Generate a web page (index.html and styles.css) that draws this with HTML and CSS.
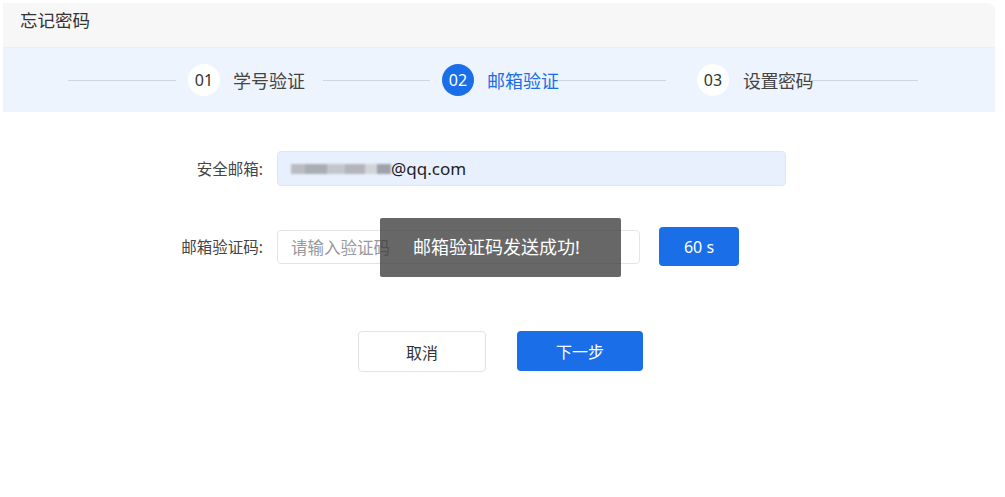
FILE: index.html
```html
<!DOCTYPE html>
<html lang="zh-CN">
<head>
    <meta charset="UTF-8">
    <link rel="stylesheet" href="styles.css">
</head>
<body>
    <div class="card">
        <div class="header">
            <span class="title">忘记密码</span>
        </div>

        <div class="steps">
            <span class="line line1"></span>
            <span class="num num1">01</span>
            <span class="step-name name1">学号验证</span>
            <span class="line line2"></span>
            <span class="num num2 active">02</span>
            <span class="step-name name2 active">邮箱验证</span>
            <span class="line line3"></span>
            <span class="num num3">03</span>
            <span class="step-name name3">设置密码</span>
            <span class="line line4"></span>
        </div>

        <div class="form">
            <div class="row row1">
                <label class="label">安全邮箱:</label>
                <div class="input input-mail">
                    <span class="blur">
                        <i class="px p1"></i><i class="px p2"></i><i class="px p3"></i><i class="px p4"></i><i class="px p5"></i><i class="px p6"></i>
                    </span>@qq.com
                </div>
            </div>
            <div class="row row2">
                <label class="label">邮箱验证码:</label>
                <div class="input input-code">请输入验证码</div>
                <button class="btn btn-primary btn-count">60 s</button>
            </div>
            <div class="actions">
                <button class="btn btn-cancel">取消</button>
                <button class="btn btn-primary btn-next">下一步</button>
            </div>
        </div>

        <div class="toast">邮箱验证码发送成功!</div>
    </div>
</body>
</html>
```

FILE: styles.css
```css
body {
    margin: 0;
    background: #fff;
    font-family: "Noto Sans", "Noto Sans CJK SC", sans-serif;
    color: #333;
}
.card {
    position: relative;
    margin: 3px 0 0 3px;
    width: 992px;
    height: 494px;
    border-radius: 0 8px 0 0;
    overflow: hidden;
}
.header {
    height: 45px;
    background: #f7f7f7;
    padding-left: 17px;
    border-bottom: 1px solid #eceef1;
    box-sizing: border-box;
}
.title {
    font-size: 17.5px;
    line-height: 35px;
    color: #333;
}

/* steps */
.steps {
    height: 64px;
    background: #eef4fd;
    display: flex;
    align-items: center;
    padding-left: 65px;
}
.line {
    height: 1px;
    background: #cfd6df;
    width: 107px;
}
.line1 { width: 108px; }
.line2 { margin-left: 18px; }
.line4 { margin-left: -3px; width: 108px; }
.num {
    width: 32px;
    height: 32px;
    border-radius: 50%;
    background: #fff;
    font-size: 16px;
    line-height: 32px;
    text-align: center;
    color: #333;
    margin-left: 12px;
}
.num3 { margin-left: 31px; }
.num.active {
    background: #1a6fe8;
    color: #fff;
}
.step-name {
    font-size: 18px;
    margin-left: 13px;
    color: #444;
}
.name3 { margin-left: 14px; letter-spacing: -0.5px; }
.step-name.active { color: #1a6fe8; }

/* form */
.form {
    padding-top: 39px;
}
.row {
    display: flex;
    align-items: center;
}
.row1 { height: 35px; }
.row2 { height: 39px; margin-top: 41px; }
.label {
    width: 260px;
    text-align: right;
    margin-right: 14px;
    font-size: 15.5px;
    color: #444;
}
.input {
    box-sizing: border-box;
    border-radius: 4px;
    display: flex;
    align-items: center;
    padding-left: 13px;
}
.input-mail {
    width: 509px;
    height: 35px;
    background: #e8f0fe;
    border: 1px solid #dde6f3;
    font-size: 17px;
    color: #222;
}
.blur {
    display: flex;
    width: 100px;
    height: 10px;
    filter: blur(1px);
    margin-top: 1px;
}
.px { display: block; height: 10px; }
.p1 { width: 14px; background: #b9bcc2; }
.p2 { width: 22px; background: #a9adb4; }
.p3 { width: 18px; background: #c3c6cc; }
.p4 { width: 20px; background: #b2b5bb; }
.p5 { width: 12px; background: #d2d4d9; }
.p6 { width: 14px; background: #9ea2aa; }
.input-code {
    width: 363px;
    height: 34px;
    background: #fff;
    border: 1px solid #e4e4e4;
    font-size: 16.5px;
    color: #999;
}
.btn {
    box-sizing: border-box;
    border-radius: 4px;
    font-family: inherit;
    font-size: 16px;
    cursor: pointer;
}
.btn-primary {
    background: #1a6fe8;
    border: none;
    color: #fff;
}
.btn-count {
    width: 80px;
    height: 39px;
    margin-left: 19px;
}
.actions {
    display: flex;
    justify-content: center;
    gap: 31px;
    margin-top: 65px;
    padding-left: 3px;
}
.btn-cancel {
    width: 128px;
    height: 41px;
    background: #fff;
    border: 1px solid #e2e2e2;
    color: #333;
}
.btn-next {
    width: 126px;
    height: 40px;
}

/* toast */
.toast {
    position: absolute;
    left: 377px;
    top: 215px;
    width: 241px;
    height: 59px;
    box-sizing: border-box;
    padding-left: 33px;
    background: rgba(60, 60, 60, 0.78);
    color: #fff;
    font-size: 18px;
    line-height: 59px;
    border-radius: 2px;
}
```
